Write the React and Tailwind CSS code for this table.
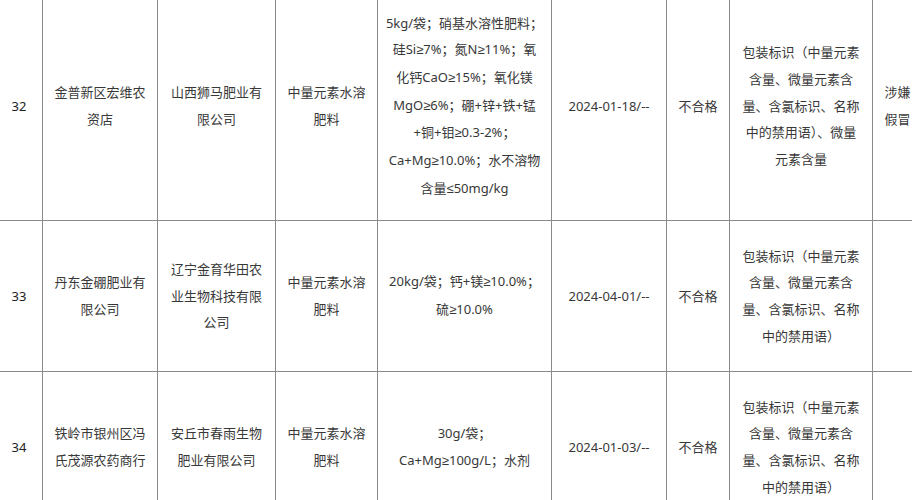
import React from "react";

const rows = [
  {
    h: "h-[229px]",
    no: "32",
    shop: ["金普新区宏维农", "资店"],
    maker: ["山西狮马肥业有", "限公司"],
    kind: ["中量元素水溶", "肥料"],
    spec: [
      "5kg/袋；硝基水溶性肥料；",
      "硅Si≥7%；氮N≥11%；氧",
      "化钙CaO≥15%；氧化镁",
      "MgO≥6%；硼+锌+铁+锰",
      "+铜+钼≥0.3-2%；",
      "Ca+Mg≥10.0%；水不溶物",
      "含量≤50mg/kg",
    ],
    date: "2024-01-18/--",
    result: "不合格",
    item: ["包装标识（中量元素", "含量、微量元素含", "量、含氯标识、名称", "中的禁用语）、微量", "元素含量"],
    note: ["涉嫌", "假冒"],
  },
  {
    h: "h-[151px]",
    no: "33",
    shop: ["丹东金硼肥业有", "限公司"],
    maker: ["辽宁金育华田农", "业生物科技有限", "公司"],
    kind: ["中量元素水溶", "肥料"],
    spec: ["20kg/袋；钙+镁≥10.0%；", "硫≥10.0%"],
    date: "2024-04-01/--",
    result: "不合格",
    item: ["包装标识（中量元素", "含量、微量元素含", "量、含氯标识、名称", "中的禁用语）"],
    note: [],
  },
  {
    h: "h-[151px]",
    no: "34",
    shop: ["铁岭市银州区冯", "氏茂源农药商行"],
    maker: ["安丘市春雨生物", "肥业有限公司"],
    kind: ["中量元素水溶", "肥料"],
    spec: ["30g/袋；", "Ca+Mg≥100g/L；水剂"],
    date: "2024-01-03/--",
    result: "不合格",
    item: ["包装标识（中量元素", "含量、微量元素含", "量、含氯标识、名称", "中的禁用语）"],
    note: [],
  },
];

// narrow ≥ / ≤ like the original, CJK font draws them full width
const withSigns = (text) =>
  text.split(/([≥≤])/).map((part, i) =>
    part === "≥" || part === "≤" ? (
      <span key={i} className="font-['Liberation_Sans',sans-serif]">
        {part}
      </span>
    ) : (
      part
    )
  );

const Lines = ({ lines }) =>
  lines.map((l, i) => (
    <React.Fragment key={i}>
      {i > 0 && <br />}
      {withSigns(l)}
    </React.Fragment>
  ));

const Cell = ({ children }) => (
  <td className="border border-[#8a8a8a] px-0 text-center align-middle whitespace-nowrap">
    {children}
  </td>
);

export default function App() {
  return (
    <div className="w-[912px] h-[500px] overflow-hidden bg-white">
      <table className="-ml-[5px] -mt-[9px] table-fixed border-collapse w-[927px] text-[13px] leading-[26.7px] text-[#383838] font-['Noto_Sans','Noto_Sans_CJK_SC',sans-serif]">
        <colgroup>
          <col className="w-[47px]" />
          <col className="w-[115px]" />
          <col className="w-[118px]" />
          <col className="w-[102px]" />
          <col className="w-[174px]" />
          <col className="w-[115px]" />
          <col className="w-[63px]" />
          <col className="w-[143px]" />
          <col className="w-[50px]" />
        </colgroup>
        <tbody>
          {rows.map((r) => (
            <tr key={r.no} className={r.h}>
              <Cell>
                <span className="text-[#222]">{r.no}</span>
              </Cell>
              <Cell>
                <Lines lines={r.shop} />
              </Cell>
              <Cell>
                <Lines lines={r.maker} />
              </Cell>
              <Cell>
                <Lines lines={r.kind} />
              </Cell>
              <Cell>
                <Lines lines={r.spec} />
              </Cell>
              <Cell>{r.date}</Cell>
              <Cell>{r.result}</Cell>
              <Cell>
                <Lines lines={r.item} />
              </Cell>
              <Cell>
                <Lines lines={r.note} />
              </Cell>
            </tr>
          ))}
        </tbody>
      </table>
    </div>
  );
}
